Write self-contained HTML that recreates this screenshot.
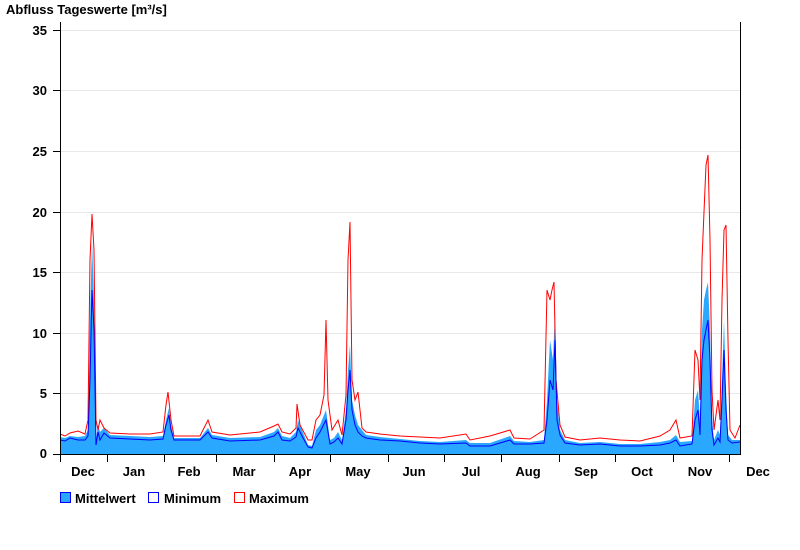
<!DOCTYPE html>
<html><head><style>
body{margin:0;background:#fff;}
svg{display:block;font-family:"Liberation Sans",Arial,sans-serif;font-weight:bold;font-size:13px;}
</style></head><body>
<svg width="800" height="550" xmlns="http://www.w3.org/2000/svg">
<text x="6" y="14" font-size="13">Abfluss Tageswerte [m³/s]</text>
<g stroke="#e8e8e8" stroke-width="1">
<line x1="60" y1="30.5" x2="740" y2="30.5"/><line x1="60" y1="90.5" x2="740" y2="90.5"/>
<line x1="60" y1="151.5" x2="740" y2="151.5"/><line x1="60" y1="212.5" x2="740" y2="212.5"/>
<line x1="60" y1="272.5" x2="740" y2="272.5"/><line x1="60" y1="333.5" x2="740" y2="333.5"/>
<line x1="60" y1="393.5" x2="740" y2="393.5"/>
</g>
<g text-anchor="end">
<text x="47" y="35">35</text><text x="47" y="95">30</text><text x="47" y="156">25</text>
<text x="47" y="217">20</text><text x="47" y="277">15</text><text x="47" y="338">10</text>
<text x="47" y="398">5</text><text x="47" y="458">0</text>
</g>
<polygon fill="#2aa8ff" points="60,454 60,437 65,438 70,436 78,437 85,436 88,430 90,320 92,240 94,300 96,440 98,425 100,432 104,428 110,435 130,436 150,437 163,436 166,420 169,408 171,425 174,438 200,438 208,428 212,435 230,438 260,437 274,432 278,428 282,436 290,438 296,432 298,420 302,430 308,445 312,446 316,430 320,425 326,410 330,440 334,438 338,432 342,440 346,410 348,370 350,345 352,400 355,415 358,425 362,430 366,435 380,437 400,439 420,441 440,442 466,440 470,443 490,443 510,436 514,441 530,442 544,440 547,400 550,340 553,360 555,310 557,400 560,430 565,440 580,443 600,442 620,444 640,444 660,442 670,440 676,435 680,442 692,441 695,400 698,390 700,420 702,330 704,300 706,290 708,282 710,330 712,420 714,440 718,430 720,435 722,380 724,320 726,390 728,435 732,440 740,440 740,454"/>
<polyline fill="none" stroke="#f00" stroke-width="1" points="60,434 65,436 70,433 78,431 85,434 88,420 90,260 92,214 94,250 96,420 98,430 100,420 104,428 110,433 130,434 150,434 163,432 166,405 168,392 171,420 174,436 200,436 208,420 212,432 230,435 260,432 274,426 278,424 282,432 290,434 296,428 297,404 300,425 308,440 312,440 316,420 320,415 324,395 326,320 328,400 332,430 338,420 342,435 346,395 348,260 350,222 352,380 355,400 358,392 362,428 366,432 380,434 400,436 420,437 440,438 466,434 470,440 490,436 510,430 514,438 530,439 544,430 547,290 550,300 552,290 554,282 556,380 560,425 565,437 580,440 600,438 620,440 640,441 660,436 670,430 676,420 680,438 692,436 695,350 698,360 700,400 702,260 704,212 706,165 708,155 710,240 712,390 714,430 718,400 720,420 722,300 724,230 726,225 728,340 730,430 735,438 740,425"/>
<polyline fill="none" stroke="#00f" stroke-width="1" points="60,440 65,441 70,438 78,440 85,440 88,436 90,380 92,290 94,330 96,445 98,432 100,440 104,433 110,438 130,439 150,440 163,439 166,425 169,415 171,430 174,440 200,440 208,432 212,438 230,441 260,440 274,436 278,432 282,440 290,441 296,437 298,428 302,436 308,447 312,448 316,438 320,432 326,420 330,444 334,442 338,438 342,444 346,420 348,390 350,370 352,410 355,425 358,432 362,436 366,438 380,440 400,441 420,443 440,444 466,443 470,446 490,446 510,440 514,444 530,444 544,443 547,420 550,380 553,390 555,340 557,420 560,435 565,443 580,445 600,444 620,446 640,446 660,445 670,443 676,440 680,446 692,444 695,420 698,410 700,435 702,360 704,340 706,330 708,320 710,360 712,430 714,445 718,438 720,442 722,400 724,350 726,410 728,440 732,443 740,442"/>
<g stroke="#000" stroke-width="1">
<line x1="60.5" y1="22" x2="60.5" y2="454"/>
<line x1="740.5" y1="22" x2="740.5" y2="454"/>
<line x1="60" y1="454.5" x2="741" y2="454.5"/>
<line x1="53" y1="30.5" x2="60" y2="30.5"/><line x1="53" y1="90.5" x2="60" y2="90.5"/>
<line x1="53" y1="151.5" x2="60" y2="151.5"/><line x1="53" y1="212.5" x2="60" y2="212.5"/>
<line x1="53" y1="272.5" x2="60" y2="272.5"/><line x1="53" y1="333.5" x2="60" y2="333.5"/>
<line x1="53" y1="393.5" x2="60" y2="393.5"/><line x1="53" y1="454.5" x2="60" y2="454.5"/>
<line x1="60.5" y1="454" x2="60.5" y2="462"/><line x1="107.5" y1="454" x2="107.5" y2="462"/>
<line x1="164.5" y1="454" x2="164.5" y2="462"/><line x1="216.5" y1="454" x2="216.5" y2="462"/>
<line x1="274.5" y1="454" x2="274.5" y2="462"/><line x1="330.5" y1="454" x2="330.5" y2="462"/>
<line x1="388.5" y1="454" x2="388.5" y2="462"/><line x1="444.5" y1="454" x2="444.5" y2="462"/>
<line x1="501.5" y1="454" x2="501.5" y2="462"/><line x1="559.5" y1="454" x2="559.5" y2="462"/>
<line x1="615.5" y1="454" x2="615.5" y2="462"/><line x1="673.5" y1="454" x2="673.5" y2="462"/>
<line x1="729.5" y1="454" x2="729.5" y2="462"/>
</g>
<g text-anchor="middle">
<text x="83" y="476">Dec</text><text x="134" y="476">Jan</text><text x="189" y="476">Feb</text>
<text x="244" y="476">Mar</text><text x="300" y="476">Apr</text><text x="358" y="476">May</text>
<text x="414" y="476">Jun</text><text x="471" y="476">Jul</text><text x="528" y="476">Aug</text>
<text x="586" y="476">Sep</text><text x="642" y="476">Oct</text><text x="700" y="476">Nov</text>
<text x="758" y="476">Dec</text>
</g>
<rect x="60.5" y="492.5" width="10" height="10" fill="#2aa8ff" stroke="#00f"/>
<text x="75" y="503">Mittelwert</text>
<rect x="148.5" y="492.5" width="10" height="10" fill="#fff" stroke="#00f"/>
<text x="164" y="503">Minimum</text>
<rect x="234.5" y="492.5" width="10" height="10" fill="#fff" stroke="#f00"/>
<text x="249" y="503">Maximum</text>
</svg>
</body></html>
